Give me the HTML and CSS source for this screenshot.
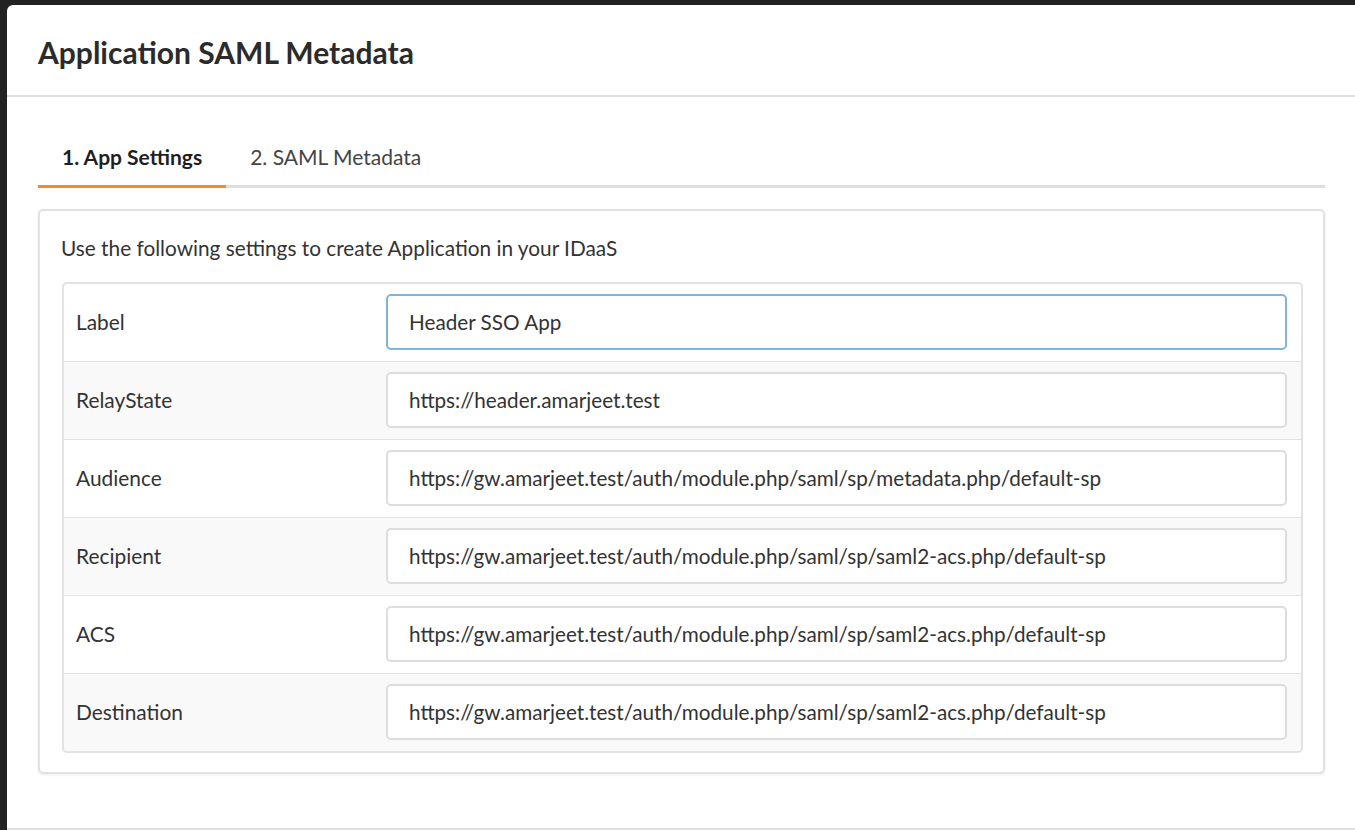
FILE: index.html
```html
<!DOCTYPE html>
<html>
<head>
<meta charset="utf-8">
<link rel="stylesheet" href="styles.css">
</head>
<body>
<div class="modal">
  <div class="modal-header">
    <h1 class="modal-title">Application SAML Metadata</h1>
  </div>
  <div class="modal-body">
    <div class="tabs">
      <div class="tab active">1. App Settings</div>
      <div class="tab">2. SAML Metadata</div>
    </div>
    <div class="card">
      <p class="intro">Use the following settings to create Application in your IDaaS</p>
      <div class="table">
        <div class="row">
          <div class="label">Label</div>
          <div class="cell"><div class="input focused">Header SSO App</div></div>
        </div>
        <div class="row alt">
          <div class="label">RelayState</div>
          <div class="cell"><div class="input">https://header.amarjeet.test</div></div>
        </div>
        <div class="row">
          <div class="label">Audience</div>
          <div class="cell"><div class="input">https://gw.amarjeet.test/auth/module.php/saml/sp/metadata.php/default-sp</div></div>
        </div>
        <div class="row alt">
          <div class="label">Recipient</div>
          <div class="cell"><div class="input">https://gw.amarjeet.test/auth/module.php/saml/sp/saml2-acs.php/default-sp</div></div>
        </div>
        <div class="row">
          <div class="label">ACS</div>
          <div class="cell"><div class="input">https://gw.amarjeet.test/auth/module.php/saml/sp/saml2-acs.php/default-sp</div></div>
        </div>
        <div class="row alt last">
          <div class="label">Destination</div>
          <div class="cell"><div class="input">https://gw.amarjeet.test/auth/module.php/saml/sp/saml2-acs.php/default-sp</div></div>
        </div>
      </div>
    </div>
  </div>
  <div class="modal-footer"></div>
</div>
</body>
</html>
```
FILE: styles.css
```css
html, body {
  margin: 0;
  padding: 0;
  height: 100%;
  overflow: hidden;
}
body {
  background: #222222;
  font-family: Lato, "Open Sans", sans-serif;
  color: #333333;
  padding: 5px 0 0 7px;
  box-sizing: border-box;
}
.modal {
  background: #ffffff;
  border-radius: 6px 0 0 0;
  height: 100%;
  display: flex;
  flex-direction: column;
  overflow: hidden;
}
.modal-header {
  border-bottom: 2px solid #e0e0e0;
  display: flex;
  align-items: center;
  padding-left: 31px;
  box-sizing: border-box;
  height: 92px;
  flex-shrink: 0;
}
.modal-title {
  margin: 0;
  font-size: 30px;
  font-weight: 700;
  color: #2b2b2b;
  padding-top: 3px;
}
.modal-body {
  padding: 0 30px 54px 31px;
  flex-shrink: 0;
}
.tabs {
  display: flex;
  margin-top: 40px;
  border-bottom: 3px solid #dedede;
  height: 48px;
}
.tab {
  padding: 0 24px;
  font-size: 21px;
  color: #444444;
  display: flex;
  align-items: center;
  margin-bottom: -3px;
  border-bottom: 3px solid transparent;
  padding-bottom: 9px;
  box-sizing: border-box;
  height: 51px;
}
.tab.active {
  font-weight: 700;
  color: #1f1f1f;
  border-bottom-color: #ef8c30;
}
.card {
  margin-top: 21px;
  border: 2px solid #e2e2e2;
  border-radius: 5px;
  box-shadow: 0 1px 3px rgba(0, 0, 0, 0.08);
  padding: 0 20px 20px 21px;
  height: 565px;
  box-sizing: border-box;
}
.intro {
  margin: 0;
  height: 71px;
  display: flex;
  align-items: center;
  font-size: 20.8px;
  color: #333333;
  padding-top: 1px;
  box-sizing: border-box;
}
.table {
  border: 2px solid #e2e2e2;
  border-radius: 5px;
  overflow: hidden;
  margin-left: 1px;
}
.row {
  display: flex;
  height: 78px;
  border-bottom: 1px solid #e2e2e2;
  box-sizing: border-box;
  align-items: center;
  padding-bottom: 2px;
}
.row.last {
  border-bottom: none;
  height: 77px;
}
.row.alt {
  background: #f9f9f9;
}
.label {
  width: 322px;
  padding-left: 12px;
  font-size: 20.9px;
  color: #333333;
  box-sizing: border-box;
}
.cell {
  flex: 1;
  padding-right: 14px;
}
.input {
  height: 56px;
  border: 2px solid #dddddd;
  border-radius: 5px;
  background: #ffffff;
  box-sizing: border-box;
  padding-left: 21px;
  display: flex;
  align-items: center;
  font-size: 20.7px;
  color: #333333;
  white-space: nowrap;
}
.input.focused {
  border-color: #80b4da;
}
.modal-footer {
  flex: 1;
  min-height: 0;
  border-top: 2px solid #e0e0e0;
}
```
